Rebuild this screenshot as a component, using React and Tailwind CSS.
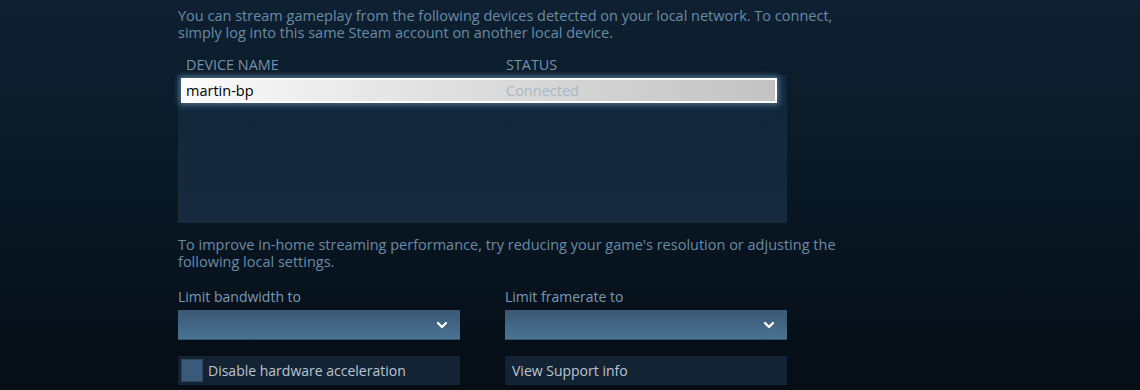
import { ChevronDown } from 'lucide-react'

function Select({ label }) {
  return (
    <div className="w-[282px]">
      <div className="text-[14px] leading-[18px] text-[#7b9ab4] mb-[4px]">{label}</div>
      <div className="h-[30px] bg-gradient-to-b from-[#3a5873] to-[#4a7394] border-b border-[#33506a] flex items-center justify-end pr-[10px]">
        <ChevronDown size={16} strokeWidth={3.5} className="text-white" />
      </div>
    </div>
  )
}

export default function App() {
  return (
    <div
      className="w-[1140px] h-[390px] overflow-hidden bg-gradient-to-b from-[#0e2031] via-[#091825] to-[#050d15]"
      style={{ fontFamily: '"Open Sans", "DejaVu Sans", sans-serif' }}
    >
      <div className="ml-[178px] w-[680px] pt-[7px]">
        <p className="text-[14.5px] leading-[17px] text-[#6a8ba6]">
          You can stream gameplay from the following devices detected on your local network. To connect,<br />
          simply log into this same Steam account on another local device.
        </p>

        <div className="w-[609px] mt-[16px]">
          <div className="flex text-[14.4px] leading-[16px] text-[#7593ac] uppercase">
            <div className="w-[328px] pl-[8px]">Device Name</div>
            <div>Status</div>
          </div>
          <div className="mt-[2px] h-[148px] bg-gradient-to-b from-[#12263a] to-[#172a3d] pt-[3px] pl-[3px] pr-[10px]">
            <div className="h-[25px] border-2 border-white shadow-[0_0_6px_2px_rgba(120,170,210,0.55)] bg-gradient-to-r from-[#fbfbfb] via-[#dcdcdc] to-[#c3c3c3] flex items-center text-[14.5px]">
              <div className="w-[323px] pl-[3px] text-black">martin-bp</div>
              <div className="text-[#a9b8c6]">Connected</div>
            </div>
          </div>
        </div>

        <p className="mt-[13px] text-[14.5px] leading-[17px] text-[#6a8ba6]">
          To improve in-home streaming performance, try reducing your game's resolution or adjusting the<br />
          following local settings.
        </p>

        <div className="mt-[18px] flex gap-[45px]">
          <Select label="Limit bandwidth to" />
          <Select label="Limit framerate to" />
        </div>

        <div className="mt-[16px] flex gap-[45px]">
          <div className="w-[282px] h-[29px] bg-[#142334] flex items-center pl-[3px] gap-[5px]">
            <div className="w-[22px] h-[23px] bg-[#3a5a79] border border-[#2c4660]" />
            <span className="text-[14px] text-[#b9c6d2]">Disable hardware acceleration</span>
          </div>
          <div className="w-[282px] h-[29px] bg-[#142334] flex items-center pl-[7px]">
            <span className="text-[14px] text-[#b9c6d2]">View Support info</span>
          </div>
        </div>
      </div>
    </div>
  )
}
